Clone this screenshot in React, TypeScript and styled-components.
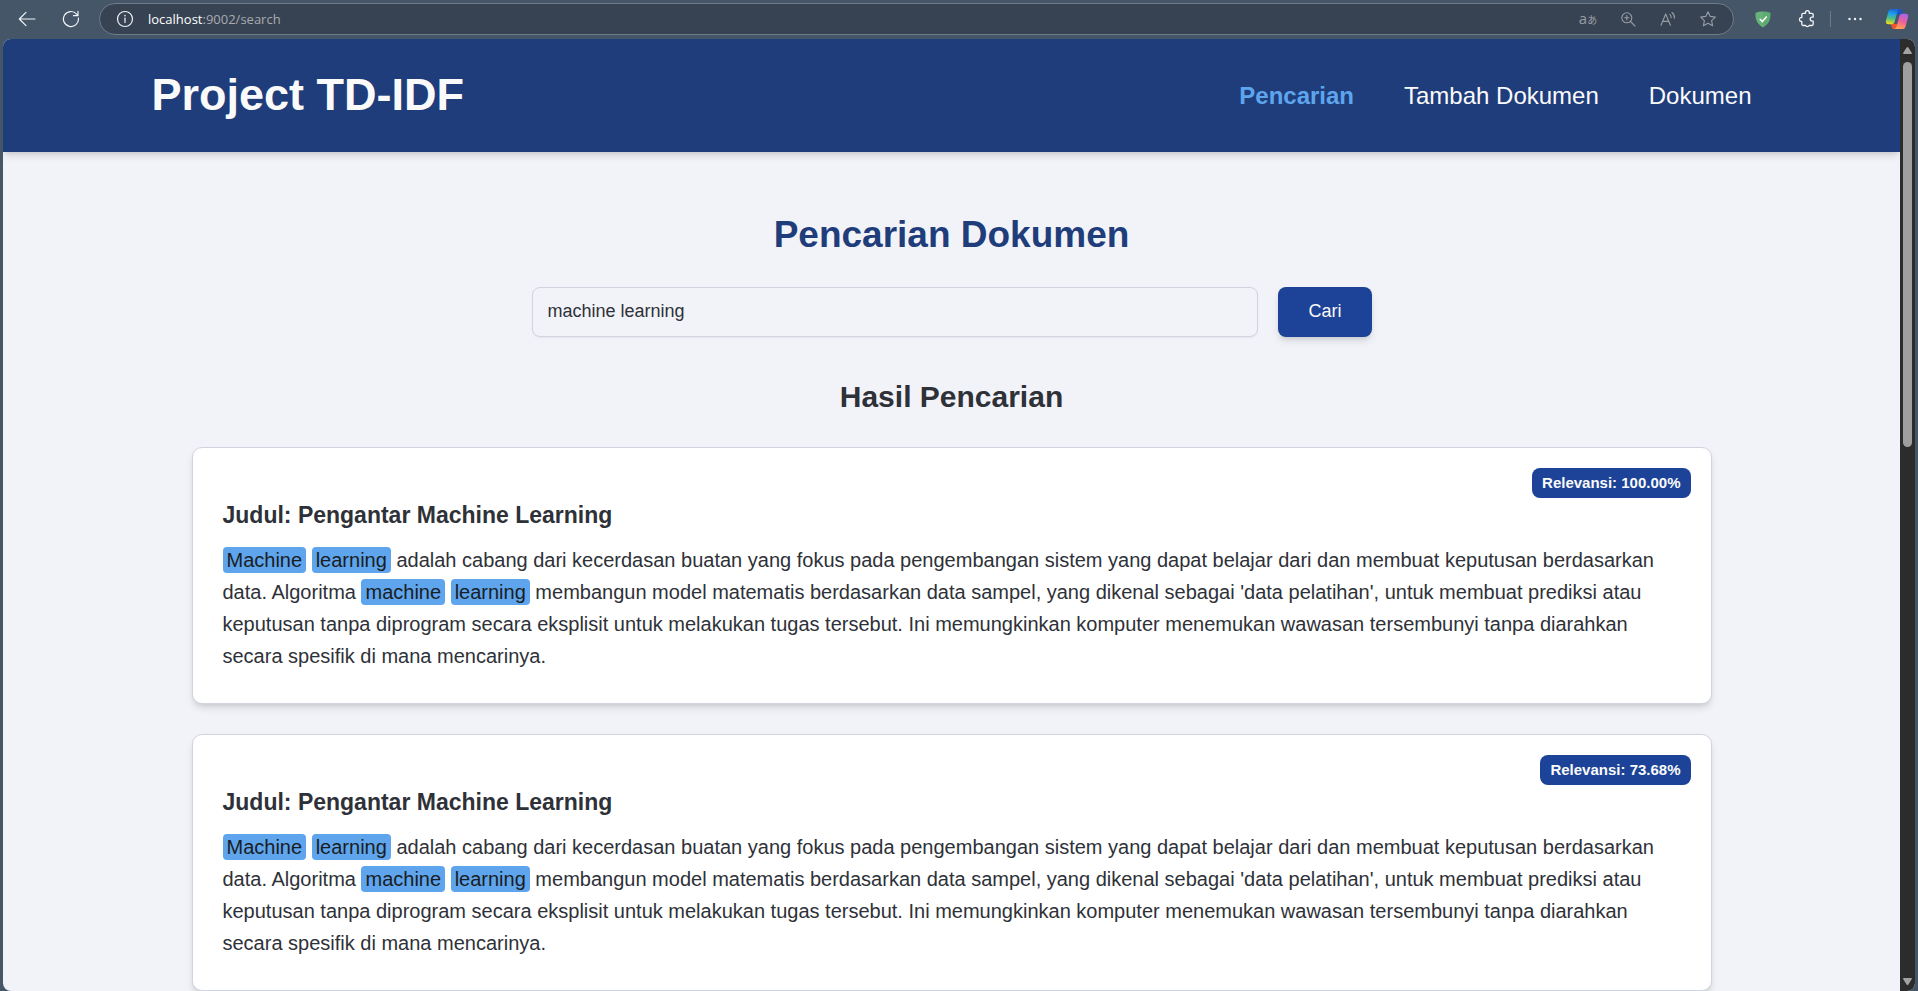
import React, { Fragment, useState } from "react";
import styled, { createGlobalStyle } from "styled-components";

const GlobalStyle = createGlobalStyle`
  *, *::before, *::after { box-sizing: border-box; }
  body {
    margin: 0;
    background: #455669;
    font-family: Arial, "Liberation Sans", Helvetica, sans-serif;
    color: #2e3138;
  }
  h1, h2, h3, p { margin: 0; }
`;

const Window = styled.div`
  display: flex;
  flex-direction: column;
  height: 100vh;
  overflow: hidden;
  background: #455669;
`;

/* Browser toolbar */

const Toolbar = styled.div`
  display: flex;
  align-items: center;
  flex: none;
  height: 39px;
  padding: 0 1px 1px 5px;
`;

const ToolButton = styled.button<{ $width?: number; $color?: string }>`
  display: flex;
  align-items: center;
  justify-content: center;
  flex: none;
  width: ${(p) => p.$width ?? 44}px;
  height: 30px;
  padding: 0;
  border: 0;
  background: none;
  color: ${(p) => p.$color ?? "#f2f4f6"};
`;

const AddressBar = styled.div`
  display: flex;
  align-items: center;
  flex: 1;
  min-width: 0;
  height: 32px;
  margin: 0 7px 0 6px;
  padding: 0 5px 0 16px;
  border: 1px solid #707b89;
  border-radius: 16px;
  background: #374353;
`;

const SiteInfo = styled(ToolButton)`
  width: 18px;
`;

const Address = styled.span`
  flex: 1;
  min-width: 0;
  padding-left: 14px;
  font-family: "Open Sans", "Noto Sans", sans-serif;
  font-size: 13px;
  line-height: 20px;
  color: #a9abae;
`;

const Host = styled.span`
  color: #ffffff;
`;

const Divider = styled.span`
  flex: none;
  width: 1px;
  height: 16px;
  margin: 0 2px 0 1px;
  background: #6f7b89;
`;

const TranslateGlyph = styled.span`
  font-family: "Open Sans", "Noto Sans CJK JP", sans-serif;
  font-size: 15px;
  line-height: 16px;

  small {
    font-size: 10px;
  }
`;

/* Page viewport and scrollbar */

const Viewport = styled.div`
  display: flex;
  flex: 1;
  min-height: 0;
  margin: 0 3px;
  border-radius: 8px;
  overflow: hidden;
  background: #f2f3f8;
`;

const Page = styled.div`
  flex: 1;
  min-width: 0;
  overflow: hidden;
`;

const Scrollbar = styled.div`
  display: flex;
  flex-direction: column;
  align-items: center;
  flex: none;
  width: 15px;
  padding: 8px 0 6px;
  background: #2c2c2c;
`;

const Thumb = styled.div`
  width: 9px;
  height: 41%;
  margin-top: 8px;
  margin-bottom: auto;
  border-radius: 5px;
  background: #9f9f9f;
`;

/* Site */

const SiteHeader = styled.header`
  position: relative;
  background: #1f3d7a;
  box-shadow: 0 5px 8px -1px rgba(0, 0, 0, 0.1), 0 3px 5px -2px rgba(0, 0, 0, 0.1);
`;

const HeaderInner = styled.div`
  display: flex;
  align-items: center;
  justify-content: space-between;
  max-width: 1600px;
  margin: 0 auto;
  padding: 31px 0 32px;
`;

const Brand = styled.div`
  font-size: 45px;
  font-weight: 700;
  line-height: 50px;
  color: #fafafa;
`;

const Nav = styled.nav`
  display: flex;
  gap: 50px;
  padding-top: 2px;
`;

const NavLink = styled.a<{ $active?: boolean }>`
  font-size: 24px;
  line-height: 36px;
  font-weight: ${(p) => (p.$active ? 700 : 400)};
  color: ${(p) => (p.$active ? "#5ea5ee" : "#fafafa")};
  text-decoration: none;
`;

const Main = styled.main`
  display: flex;
  flex-direction: column;
  align-items: center;
  max-width: 1600px;
  margin: 0 auto;
  padding: 60px 40px;
`;

const PageTitle = styled.h1`
  margin-bottom: 30px;
  font-size: 37px;
  line-height: 45px;
  font-weight: 700;
  color: #1f3d7a;
`;

const SearchForm = styled.form`
  display: flex;
  gap: 20px;
  width: 100%;
  max-width: 840px;
`;

const SearchInput = styled.input`
  flex: 1;
  min-width: 0;
  height: 50px;
  padding: 0 15px 2px;
  border: 1px solid #d1d4de;
  border-radius: 8px;
  outline: none;
  background: #f2f3f8;
  box-shadow: 0 1px 2px rgba(0, 0, 0, 0.05);
  font-family: inherit;
  font-size: 18px;
  color: #2e3138;
`;

const SearchButton = styled.button`
  height: 50px;
  padding: 0 30px 2px;
  border: 0;
  border-radius: 8px;
  background: #1c4398;
  box-shadow: 0 5px 8px -1px rgba(0, 0, 0, 0.1), 0 3px 5px -2px rgba(0, 0, 0, 0.1);
  font-family: inherit;
  font-size: 18px;
  color: #fafafa;
`;

const ResultsTitle = styled.h2`
  margin: 40px 0 30px;
  font-size: 30px;
  line-height: 40px;
  font-weight: 700;
`;

const Results = styled.div`
  display: flex;
  flex-direction: column;
  gap: 30px;
  width: 100%;
`;

const Card = styled.article`
  position: relative;
  padding: 50px 30px 31px;
  border: 1px solid #d1d4de;
  border-radius: 10px;
  background: #ffffff;
  box-shadow: 0 5px 8px -1px rgba(0, 0, 0, 0.1), 0 3px 5px -2px rgba(0, 0, 0, 0.1);
`;

const Relevance = styled.span`
  position: absolute;
  top: 20px;
  right: 20px;
  padding: 5px 10px;
  border-radius: 8px;
  background: #1c4398;
  font-size: 15px;
  line-height: 20px;
  font-weight: 700;
  color: #fafafa;
`;

const CardTitle = styled.h3`
  margin-bottom: 12px;
  font-size: 23px;
  line-height: 34px;
  font-weight: 700;
`;

const Excerpt = styled.p`
  font-size: 20px;
  line-height: 32px;
`;

const Highlight = styled.mark`
  padding: 2px 4px;
  border-radius: 4px;
  background: #5ea5ee;
  color: #1a1d23;
`;

const BackIcon = () => (
  <svg width="18" height="16" viewBox="0 0 18 16" fill="none" stroke="currentColor" strokeWidth="1.2" strokeLinecap="round" strokeLinejoin="round">
    <path d="M17 8H1.5M8 1.3 1.3 8 8 14.7" />
  </svg>
);

const RefreshIcon = () => (
  <svg width="18" height="18" viewBox="0 0 18 18" fill="none" stroke="currentColor" strokeWidth="1.2" strokeLinecap="round" strokeLinejoin="round">
    <path d="M16.4 8.2A7.5 7.5 0 1 1 14.6 4.1L15.8 5.3M16 1.4v4.3h-4.5" />
  </svg>
);

const InfoIcon = () => (
  <svg width="18" height="18" viewBox="0 0 18 18" fill="none" stroke="currentColor" strokeWidth="1.2" strokeLinecap="round">
    <circle cx="9" cy="9" r="7.5" />
    <path d="M9 8.2v4.3" />
    <circle cx="9" cy="5.6" r=".3" />
  </svg>
);

const ZoomIcon = () => (
  <svg width="16" height="16" viewBox="0 0 16 16" fill="none" stroke="currentColor" strokeWidth="1.1" strokeLinecap="round">
    <circle cx="6.8" cy="6.8" r="5" />
    <path d="M10.5 10.5 15 15M6.8 4.6V9M4.6 6.8H9" />
  </svg>
);

const ReadAloudIcon = () => (
  <svg width="18" height="16" viewBox="0 0 18 16" fill="none" stroke="currentColor" strokeWidth="1.1" strokeLinecap="round" strokeLinejoin="round">
    <path d="M2 14.3 6.7 3l4.7 11.3M3.7 10.4h6M10.8 3.3c1 .9 1.4 2 1.3 3.4M13 1.5c1.8 1.4 2.7 3.4 2.4 5.6" />
  </svg>
);

const StarIcon = () => (
  <svg width="18" height="18" viewBox="0 0 18 18" fill="none" stroke="currentColor" strokeWidth="1.1" strokeLinejoin="round">
    <path d="M9 1.7 11.2 6.4 16.4 7.1 12.6 10.6 13.6 15.8 9 13.3 4.4 15.8 5.4 10.6 1.6 7.1 6.8 6.4Z" />
  </svg>
);

const ShieldIcon = () => (
  <svg width="16" height="17" viewBox="0 0 16 17">
    <path fill="#67b279" d="M8 .6C5.500.6 2.500 1 .5 2c0 5 0 9.800 7.500 14.400V.6Z" />
    <path fill="#5cab70" d="M8 .6c2.500 0 5.500.4 7.500 1.400 0 5 0 9.800-7.500 14.400V.6Z" />
    <path d="m4.800 7.900 2.600 2.700 4.300-5" fill="none" stroke="#fff" strokeWidth="1.5" />
  </svg>
);

const ExtensionsIcon = () => (
  <svg width="16" height="18" viewBox="0 0 16 18" fill="none" stroke="currentColor" strokeWidth="1.3" strokeLinejoin="round">
    <path d="M4.200 3.300h2.300a2 2 0 1 1 3.800 0h2.500a1.400 1.400 0 0 1 1.400 1.400v2.400h-1a2 2 0 0 0 0 4h1v3a1.400 1.400 0 0 1-1.400 1.400h-2.600a2 2 0 0 1-3.600 0H4.200a1.400 1.400 0 0 1-1.400-1.400v-2.700a2 2 0 1 1 0-3.900V4.700a1.400 1.400 0 0 1 1.400-1.400Z" />
  </svg>
);

const MoreIcon = () => (
  <svg width="16" height="4" viewBox="0 0 16 4" fill="currentColor">
    <circle cx="2.500" cy="2" r="1.200" />
    <circle cx="8" cy="2" r="1.200" />
    <circle cx="13.500" cy="2" r="1.200" />
  </svg>
);

const AssistantIcon = () => (
  <svg width="24" height="22" viewBox="0 0 24 22">
    <defs>
      <linearGradient id="coolRibbon" x1=".6" y1="0" x2=".45" y2="1">
        <stop offset="0" stopColor="#1b62d8" />
        <stop offset=".35" stopColor="#1fa2ea" />
        <stop offset=".65" stopColor="#4fc080" />
        <stop offset="1" stopColor="#f0dc22" />
      </linearGradient>
      <linearGradient id="warmRibbon" x1=".7" y1="0" x2=".4" y2="1">
        <stop offset="0" stopColor="#a765ec" />
        <stop offset=".5" stopColor="#ee5f9d" />
        <stop offset="1" stopColor="#ffa24d" />
      </linearGradient>
    </defs>
    <path fill="#1c55c4" d="M11 1h3.900c1.300 0 1.900.8 2.200 2l.9 3.300h-6Z" />
    <path fill="#f0562e" d="M13 21H9c-1.300 0-1.900-.8-2.200-2l-1-3.300h6Z" />
    <path fill="url(#coolRibbon)" d="M6.500 1h8.200c-1.300.3-1.900 1.100-2.300 2.400L9.700 13.500c-.5 1.700-1.500 2.700-3.200 2.700H3.500C1.200 16.200.4 14.600 1 12.400L3.400 3.600C3.900 1.900 4.900 1 6.500 1Z" />
    <path fill="url(#warmRibbon)" d="M17.500 21H9.300c1.300-.3 1.900-1.100 2.300-2.400l2.700-10.100c.5-1.700 1.500-2.700 3.200-2.700h3c2.300 0 3.100 1.600 2.500 3.800l-2.400 8.800c-.5 1.700-1.500 2.600-3.100 2.600Z" />
  </svg>
);

const ScrollArrow = ({ down }: { down?: boolean }) => (
  <svg width="9" height="7" viewBox="0 0 9 7" fill="#a3a3a3">
    <path d={down ? "M0 .8Q0 0 .8 0H8.200Q9 0 9 .8L5.400 6.400Q4.500 7.500 3.600 6.400Z" : "M0 6.200Q0 7 .8 7H8.200Q9 7 9 6.200L5.400.6Q4.500-.5 3.600.6Z"} />
  </svg>
);

const results = [
  { id: 1, score: "100.00%" },
  { id: 2, score: "73.68%" },
].map((r) => ({
  ...r,
  title: "Pengantar Machine Learning",
  body:
    "Machine learning adalah cabang dari kecerdasan buatan yang fokus pada pengembangan sistem yang dapat belajar dari dan membuat keputusan berdasarkan data. Algoritma machine learning membangun model matematis berdasarkan data sampel, yang dikenal sebagai 'data pelatihan', untuk membuat prediksi atau keputusan tanpa diprogram secara eksplisit untuk melakukan tugas tersebut. Ini memungkinkan komputer menemukan wawasan tersembunyi tanpa diarahkan secara spesifik di mana mencarinya.",
}));

const highlightTerms = (text: string) =>
  text
    .split(/(machine|learning)/i)
    .map((part, i) => (i % 2 ? <Highlight key={i}>{part}</Highlight> : <Fragment key={i}>{part}</Fragment>));

export default function App() {
  const [query, setQuery] = useState("machine learning");

  return (
    <Window>
      <GlobalStyle />
      <Toolbar>
        <ToolButton aria-label="Back"><BackIcon /></ToolButton>
        <ToolButton aria-label="Refresh"><RefreshIcon /></ToolButton>
        <AddressBar>
          <SiteInfo aria-label="Site information"><InfoIcon /></SiteInfo>
          <Address><Host>localhost</Host>:9002/search</Address>
          <ToolButton $width={40} $color="#979da5" aria-label="Translate">
            <TranslateGlyph>a<small>あ</small></TranslateGlyph>
          </ToolButton>
          <ToolButton $width={40} $color="#979da5" aria-label="Zoom"><ZoomIcon /></ToolButton>
          <ToolButton $width={40} $color="#979da5" aria-label="Read aloud"><ReadAloudIcon /></ToolButton>
          <ToolButton $width={40} $color="#979da5" aria-label="Add to favorites"><StarIcon /></ToolButton>
        </AddressBar>
        <ToolButton aria-label="Ad blocker"><ShieldIcon /></ToolButton>
        <ToolButton aria-label="Extensions"><ExtensionsIcon /></ToolButton>
        <Divider />
        <ToolButton aria-label="More"><MoreIcon /></ToolButton>
        <ToolButton $width={40} aria-label="Copilot"><AssistantIcon /></ToolButton>
      </Toolbar>

      <Viewport>
        <Page>
          <SiteHeader>
            <HeaderInner>
              <Brand>Project TD-IDF</Brand>
              <Nav>
                <NavLink href="#search" $active>Pencarian</NavLink>
                <NavLink href="#add">Tambah Dokumen</NavLink>
                <NavLink href="#documents">Dokumen</NavLink>
              </Nav>
            </HeaderInner>
          </SiteHeader>
          <Main>
            <PageTitle>Pencarian Dokumen</PageTitle>
            <SearchForm onSubmit={(e) => e.preventDefault()}>
              <SearchInput aria-label="Pencarian Dokumen" value={query} onChange={(e) => setQuery(e.target.value)} />
              <SearchButton type="submit">Cari</SearchButton>
            </SearchForm>
            <ResultsTitle>Hasil Pencarian</ResultsTitle>
            <Results>
              {results.map((r) => (
                <Card key={r.id}>
                  <Relevance>Relevansi: {r.score}</Relevance>
                  <CardTitle>Judul: {r.title}</CardTitle>
                  <Excerpt>{highlightTerms(r.body)}</Excerpt>
                </Card>
              ))}
            </Results>
          </Main>
        </Page>
        <Scrollbar>
          <ScrollArrow />
          <Thumb />
          <ScrollArrow down />
        </Scrollbar>
      </Viewport>
    </Window>
  );
}
